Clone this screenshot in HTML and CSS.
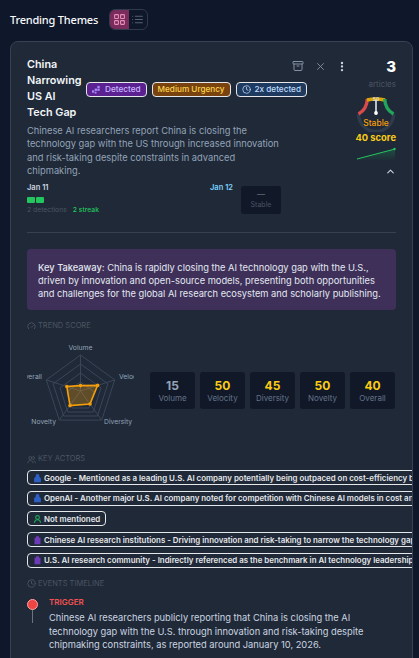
FILE: index.html
```html
<!DOCTYPE html>
<html lang="en">
<head>
<meta charset="utf-8">
<title>Trending Themes</title>
<link rel="stylesheet" href="styles.css">
</head>
<body>
<div class="page">
  <header class="top">
    <h1>Trending Themes</h1>
    <div class="toggle">
      <span class="tg on"><svg width="13" height="13" viewBox="0 0 24 24" fill="none" stroke="#e88fb8" stroke-width="2"><rect x="3" y="3" width="7" height="7" rx="1"/><rect x="14" y="3" width="7" height="7" rx="1"/><rect x="3" y="14" width="7" height="7" rx="1"/><rect x="14" y="14" width="7" height="7" rx="1"/></svg></span>
      <span class="tg"><svg width="13" height="13" viewBox="0 0 24 24" fill="none" stroke="#566173" stroke-width="2" stroke-linecap="round"><path d="M8 6h13M8 12h13M8 18h13M3 6h.01M3 12h.01M3 18h.01"/></svg></span>
    </div>
  </header>
  <section class="card">
    <div class="actions">
      <svg width="12" height="12" viewBox="0 0 24 24" fill="none" stroke="#8492a6" stroke-width="2" stroke-linecap="round" stroke-linejoin="round"><rect x="2" y="3" width="20" height="5" rx="1"/><path d="M4 8v11a2 2 0 0 0 2 2h12a2 2 0 0 0 2-2V8M10 12h4"/></svg>
      <svg width="9" height="9" viewBox="0 0 24 24" fill="none" stroke="#8492a6" stroke-width="2.4" stroke-linecap="round"><path d="M20 4 4 20M4 4l16 16"/></svg>
      <svg width="10" height="11" viewBox="0 0 24 24" fill="#cbd5e1"><circle cx="12" cy="3.5" r="2.8"/><circle cx="12" cy="12" r="2.8"/><circle cx="12" cy="20.5" r="2.8"/></svg>
    </div>
    <div class="head">
      <div class="main">
        <div class="titlerow">
          <h2>China Narrowing US AI Tech Gap</h2>
          <span class="badge b-purple"><svg width="9" height="9" viewBox="0 0 10 10" fill="#a78bfa"><rect x="0" y="6" width="2.5" height="2.5"/><rect x="3" y="4" width="2.5" height="2.5"/><rect x="3" y="7.5" width="2" height="2"/><rect x="6" y="1" width="2.5" height="2.5"/><rect x="6" y="4" width="2.5" height="2.5"/></svg>Detected</span>
          <span class="badge b-amber">Medium Urgency</span>
          <span class="badge b-blue"><svg width="9" height="9" viewBox="0 0 24 24" fill="none" stroke="#bfdbfe" stroke-width="2" stroke-linecap="round"><circle cx="12" cy="12" r="10"/><path d="M12 6v6l4 2"/></svg>2x detected</span>
        </div>
        <p class="desc">Chinese AI researchers report China is closing the technology gap with the US through increased innovation and risk-taking despite constraints in advanced chipmaking.</p>
        <div class="timeline">
          <div class="tl-left">
            <div class="date">Jan 11</div>
            <div class="cells"><i></i><i></i></div>
            <div class="tl-meta"><span>2 detections</span><b>2 streak</b></div>
          </div>
          <div class="date date2">Jan 12</div>
          <div class="stable"><span class="dash">—</span><span>Stable</span></div>
        </div>
      </div>
      <aside class="side">
        <div class="count">3</div>
        <div class="articles">articles</div>
        <div class="gauge">
          <svg width="44" height="40" viewBox="0 0 44 40" fill="none" stroke-width="3.4">
            <path d="M4.5 22A17.5 17.5 0 0 0 39.5 22" stroke="#2f3b4d"/>
            <path d="M4.5 22C9 19.5 13 15 13.3 7" stroke="#d94a4a"/>
            <path d="M13 8Q22 6 31 8" stroke="#d9a406"/>
            <path d="M39.5 22C35 19.5 31 15 30.7 7" stroke="#22a55b"/>
            <path d="M22 21V8" stroke="#e5e7eb" stroke-width="1.6"/>
            <circle cx="22" cy="21" r="1.9" fill="#fff" stroke="none"/>
          </svg>
          <span class="g50">50</span>
          <span class="gstable">Stable</span>
        </div>
        <div class="score">40 score</div>
        <svg class="spark" width="40" height="14" viewBox="0 0 40 14"><defs><linearGradient id="sg" x1="0" y1="0" x2="0" y2="1"><stop offset="0" stop-color="#22c55e" stop-opacity=".25"/><stop offset="1" stop-color="#22c55e" stop-opacity="0"/></linearGradient></defs><path d="M1 12 39 2V14H1Z" fill="url(#sg)"/><path d="M1 12 39 2" stroke="#22c55e" fill="none"/><circle cx="38.5" cy="2" r="1.2" fill="#22c55e"/></svg>
        <svg class="chev" width="11" height="11" viewBox="0 0 24 24" fill="none" stroke="#cbd5e1" stroke-width="2.4" stroke-linecap="round" stroke-linejoin="round"><path d="m18 15-6-6-6 6"/></svg>
      </aside>
    </div>
    <hr class="rule">
    <div class="takeaway"><strong>Key Takeaway:</strong> China is rapidly closing the AI technology gap with the U.S., driven by innovation and open-source models, presenting both opportunities and challenges for the global AI research ecosystem and scholarly publishing.</div>
    <div class="label"><svg width="9" height="9" viewBox="0 0 24 24" fill="none" stroke="#4b5563" stroke-width="2.4" stroke-linecap="round"><path d="M4 18a10 10 0 1 1 16 0M12 14l4-4"/></svg>TREND SCORE</div>
    <div class="trend">
      <svg class="radar" width="107" height="99" viewBox="0 0 107 99">
        <g fill="none" stroke="#3a4658" stroke-width="1">
          <polygon points="53.5,14 87.7,38.9 74.7,79.1 32.3,79.1 19.3,38.9"/>
          <polygon points="53.5,23 80.9,42.8 70.4,75 36.6,75 26.1,42.8"/>
          <polygon points="53.5,32 74,46.9 66.2,71 40.8,71 33,46.9"/>
          <polygon points="53.5,41 67.2,50.9 61.9,67 45.1,67 39.8,50.9"/>
          <path d="M53.5 50V14M53.5 50 87.7 38.9M53.5 50 74.7 79.1M53.5 50 32.3 79.1M53.5 50 19.3 38.9"/>
        </g>
        <polygon points="53.5,44.6 70.6,44.4 63,63 43,64.6 39.8,45.5" fill="#f59e0b" fill-opacity=".3" stroke="#f59e0b" stroke-width="1.6"/>
        <g fill="#f59e0b"><circle cx="53.5" cy="44.6" r="1.8"/><circle cx="70.6" cy="44.4" r="1.8"/><circle cx="63" cy="63" r="1.8"/><circle cx="43" cy="64.6" r="1.8"/><circle cx="39.8" cy="45.5" r="1.8"/></g>
        <g class="rl">
          <text x="53.5" y="9" text-anchor="middle">Volume</text>
          <text x="92" y="38">Velocity</text>
          <text x="77" y="83">Diversity</text>
          <text x="29" y="83" text-anchor="end">Novelty</text>
          <text x="15" y="38" text-anchor="end">Overall</text>
        </g>
      </svg>
      <div class="stats">
        <div class="stat"><b class="grey">15</b><span>Volume</span></div>
        <div class="stat"><b>50</b><span>Velocity</span></div>
        <div class="stat"><b>45</b><span>Diversity</span></div>
        <div class="stat"><b>50</b><span>Novelty</span></div>
        <div class="stat"><b>40</b><span>Overall</span></div>
      </div>
    </div>
    <div class="label actors-l"><svg width="9" height="9" viewBox="0 0 24 24" fill="none" stroke="#4b5563" stroke-width="2.2" stroke-linecap="round"><circle cx="9" cy="8" r="4"/><path d="M2 21c0-4 3-6 7-6s7 2 7 6M16 4a4 4 0 0 1 0 8M19 15c2 1 3 3 3 6"/></svg>KEY ACTORS</div>
    <div class="actors">
      <div class="actor"><svg width="9" height="10" viewBox="0 0 24 24" fill="#2d5fc4"><path d="M3 23V14c0-3 2-4 4-5V6a5 5 0 0 1 10 0v3c2 1 4 2 4 5v9Z"/></svg><span>Google - Mentioned as a leading U.S. AI company potentially being outpaced on cost-efficiency by Chinese models</span></div>
      <div class="actor"><svg width="9" height="10" viewBox="0 0 24 24" fill="#2d5fc4"><path d="M3 23V14c0-3 2-4 4-5V6a5 5 0 0 1 10 0v3c2 1 4 2 4 5v9Z"/></svg><span>OpenAI - Another major U.S. AI company noted for competition with Chinese AI models in cost and performance terms</span></div>
      <div class="actor fit"><svg width="9" height="10" viewBox="0 0 24 24" fill="none" stroke="#22a55b" stroke-width="3"><circle cx="12" cy="8" r="5"/><path d="M4 22c0-5 3-8 8-8s8 3 8 8"/></svg><span>Not mentioned</span></div>
      <div class="actor"><svg width="9" height="10" viewBox="0 0 24 24" fill="#6d3bb8"><path d="M4 23V6h4V2h8v4h4v17Z"/></svg><span>Chinese AI research institutions - Driving innovation and risk-taking to narrow the technology gap with the U.S. firms</span></div>
      <div class="actor"><svg width="9" height="10" viewBox="0 0 24 24" fill="#6d3bb8"><path d="M4 23V6h4V2h8v4h4v17Z"/></svg><span>U.S. AI research community - Indirectly referenced as the benchmark in AI technology leadership and innovation</span></div>
    </div>
    <div class="label events-l"><svg width="9" height="9" viewBox="0 0 24 24" fill="none" stroke="#4b5563" stroke-width="2.4" stroke-linecap="round"><circle cx="12" cy="12" r="10"/><path d="M12 6v6l4 2"/></svg>EVENTS TIMELINE</div>
    <div class="event">
      <div class="pin"><span class="dot"></span><span class="stem"></span></div>
      <div class="ev-body">
        <div class="ev-t">TRIGGER</div>
        <p>Chinese AI researchers publicly reporting that China is closing the AI technology gap with the U.S. through innovation and risk-taking despite chipmaking constraints, as reported around January 10, 2026.</p>
      </div>
    </div>
  </section>
</div>
</body>
</html>
```
FILE: styles.css
```css
* { box-sizing: border-box; }
html, body { margin: 0; height: 100%; overflow: hidden; background: #0f172a; }
body { font-family: Inter, "Liberation Sans", sans-serif; color: #e5e7eb; }
.page { padding: 9px 6px 0 10px; height: 658px; overflow: hidden; }
.top { display: flex; align-items: center; gap: 11px; height: 21px; }
.top h1 { margin: 0; font-family: "Noto Sans", sans-serif; font-size: 11px; letter-spacing: -.2px; font-weight: 500; color: #f8fafc; }
.toggle { display: flex; width: 39px; height: 21px; border: 1px solid #2f3a4b; border-radius: 6px; overflow: hidden; }
.tg { flex: 1; display: flex; align-items: center; justify-content: center; }
.tg.on { background: #7a2d5c; }
.card { position: relative; margin-top: 11px; background: #1f2937; border: 1px solid #374151; border-radius: 8px 8px 0 0; padding: 15px 16px 0; overflow: hidden; height: 640px; }
.actions { position: absolute; top: 18px; left: 281px; display: flex; align-items: center; gap: 12px; }
.head { display: flex; }
.main { flex: 1; min-width: 0; }
.titlerow { display: flex; align-items: center; gap: 5px; }
h2 { margin: 0 -1px 0 0; width: 55px; flex: none; font-size: 10.8px; line-height: 16px; font-weight: 600; color: #f1f5f9; }
.badge { display: inline-flex; align-items: center; gap: 4px; height: 15px; padding: 0 5px; border: 1px solid #e5e7eb; border-radius: 4px; font-size: 8.2px; font-weight: 500; white-space: nowrap; }
.b-purple { background: #5b2191; color: #c7b6fb; }
.b-amber { background: #78430f; color: #fcd34d; }
.b-blue { background: #1e3a5f; color: #bfdbfe; }
.desc { margin: 3px 0 0; width: 258px; font-size: 9.3px; line-height: 13.4px; color: #94a3b8; }
.timeline { display: flex; margin-top: 3px; align-items: flex-start; }
.tl-left { width: 183px; }
.date { font-size: 7.5px; font-weight: 600; line-height: 10px; margin-top: 2px; color: #cbd5e1; }
.date2 { width: 31px; color: #7dd3fc; }
.cells { display: flex; gap: 1px; margin-top: 4px; }
.cells i { width: 8px; height: 6px; background: #22c55e; border-radius: 1px; }
.tl-meta { display: flex; gap: 6px; margin-top: 2px; font-size: 6.8px; line-height: 10px; color: #4b5563; }
.tl-meta b { color: #22c55e; font-weight: 500; }
.stable { width: 40px; height: 28px; margin-top: 5px; background: #111827; border-radius: 3px; display: flex; flex-direction: column; align-items: center; justify-content: center; font-size: 7px; color: #4b5563; gap: 2px; }
.dash { line-height: 8px; font-size: 8px; color: #6b7280; }
.side { width: 54px; flex: none; display: flex; flex-direction: column; align-items: flex-end; }
.count { font-size: 15px; font-weight: 800; color: #fff; line-height: 18px; margin-top: 1px; }
.articles { font-size: 8px; line-height: 10px; margin-top: 3px; color: #4b5563; }
.gauge { position: relative; width: 44px; height: 40px; margin: 3px -2px 0 0; }
.gauge svg { display: block; }
.g50 { position: absolute; top: 4px; left: 0; right: 0; text-align: center; font-size: 5px; line-height: 6px; color: #e5e7eb; font-weight: 600; }
.gstable { position: absolute; top: 25.5px; left: 0; right: 0; text-align: center; font-size: 8.5px; line-height: 11px; color: #f59e0b; font-weight: 500; }
.score { font-size: 9.4px; font-weight: 700; line-height: 12px; color: #facc15; white-space: nowrap; }
.spark { display: block; margin-top: 3px; }
.chev { display: block; margin-top: 4.5px; }
.rule { border: 0; border-top: 1px solid #374151; margin: 17.4px 0 0; }
.takeaway { margin-top: 16px; background: #3e3059; border-radius: 4px; padding: 11.5px 11px; font-size: 9.3px; line-height: 13px; color: #e2e8f0; height: 61px; }
.takeaway strong { font-weight: 500; }
.label { display: flex; align-items: center; gap: 2px; margin-top: 11px; font-size: 7.5px; line-height: 10px; color: #4b5563; }
.trend { display: flex; align-items: center; gap: 16px; margin-top: 10px; }
.radar { display: block; flex: none; overflow: hidden; }
.rl text { font-size: 6.8px; fill: #94a3b8; font-family: Inter, sans-serif; }
.stats { display: flex; gap: 5px; }
.stat { width: 45px; height: 37px; background: #111827; border-radius: 3px; display: flex; flex-direction: column; align-items: center; justify-content: center; font-size: 8px; color: #64748b; }
.stat b { font-size: 12px; line-height: 15px; font-weight: 700; color: #facc15; }
.stat b.grey { color: #94a3b8; }
.actors-l { margin-top: 14px; }
.actors { display: flex; flex-direction: column; gap: 5.7px; margin-top: 6px; width: 500px; }
.actor { display: flex; align-items: center; gap: 2px; height: 15px; padding: 0 5px; border: 1px solid #e5e7eb; border-radius: 4px; font-size: 7.9px; font-weight: 600; color: #e5e7eb; white-space: nowrap; overflow: hidden; }
.actor.fit { align-self: flex-start; }
.events-l { margin-top: 11px; }
.event { display: flex; gap: 11px; margin-top: 8.5px; }
.pin { width: 11px; flex: none; display: flex; flex-direction: column; align-items: center; padding-top: 2px; }
.dot { width: 11px; height: 11px; flex: none; border-radius: 50%; background: #ef4444; border: 1px solid #fca5a5; }
.stem { width: 1px; height: 13px; background: #6b7280; }
.ev-body { width: 340px; }
.ev-t { font-size: 8px; font-weight: 600; color: #f05252; line-height: 11px; }
.ev-body p { margin: 3px 0 0; font-size: 9.3px; line-height: 13.4px; color: #cbd5e1; }
```
